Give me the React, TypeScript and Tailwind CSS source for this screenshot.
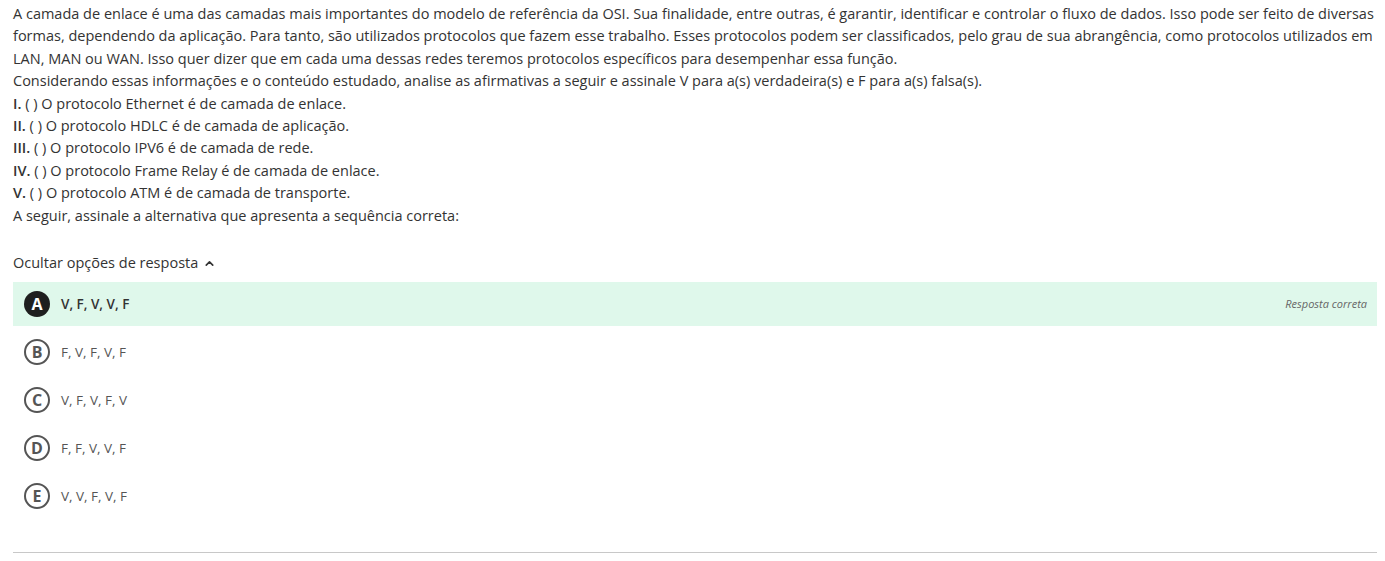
import { ChevronUp } from "lucide-react";

const options = [
  { letter: "A", text: "V, F, V, V, F", correct: true },
  { letter: "B", text: "F, V, F, V, F" },
  { letter: "C", text: "V, F, V, F, V" },
  { letter: "D", text: "F, F, V, V, F" },
  { letter: "E", text: "V, V, F, V, F" },
];

const items = [
  ["I.", "O protocolo Ethernet é de camada de enlace."],
  ["II.", "O protocolo HDLC é de camada de aplicação."],
  ["III.", "O protocolo IPV6 é de camada de rede."],
  ["IV.", "O protocolo Frame Relay é de camada de enlace."],
  ["V.", "O protocolo ATM é de camada de transporte."],
];

export default function App() {
  return (
    <div className="bg-white min-h-screen pl-[13px] pr-[8px] pt-[3px] font-['Open_Sans',sans-serif] text-[14.5px] leading-[22.4px] text-[#333]">
      <div>
        <p>
          A camada de enlace é uma das camadas mais importantes do modelo de referência da OSI. Sua finalidade, entre outras, é garantir, identificar e controlar o fluxo de dados. Isso pode ser feito de diversas formas, dependendo da aplicação. Para tanto, são utilizados protocolos que fazem esse trabalho. Esses protocolos podem ser classificados, pelo grau de sua abrangência, como protocolos utilizados em LAN, MAN ou WAN. Isso quer dizer que em cada uma dessas redes teremos protocolos específicos para desempenhar essa função.
        </p>
        <p>
          Considerando essas informações e o conteúdo estudado, analise as afirmativas a seguir e assinale V para a(s) verdadeira(s) e F para a(s) falsa(s).
        </p>
        {items.map(([n, t]) => (
          <p key={n}>
            <span className="font-semibold">{n}</span> ( ) {t}
          </p>
        ))}
        <p>A seguir, assinale a alternativa que apresenta a sequência correta:</p>
      </div>

      <button className="mt-[25px] flex items-center gap-[5px] text-[14.5px] text-[#333]">
        Ocultar opções de resposta
        <ChevronUp size={13} strokeWidth={3} />
      </button>

      <div className="mt-[8px] flex flex-col gap-[4px]">
        {options.map((o) =>
          o.correct ? (
            <div key={o.letter} className="flex h-[44px] items-center bg-[#dff8eb] pl-[11px] pr-[10px]">
              <span className="flex h-[26px] w-[26px] items-center justify-center rounded-full bg-[#1f1f1f] text-[16px] font-bold text-white">
                {o.letter}
              </span>
              <span className="ml-[11px] text-[13.5px] font-semibold text-[#333]">{o.text}</span>
              <span className="ml-auto text-[11px] italic text-[#666]">Resposta correta</span>
            </div>
          ) : (
            <div key={o.letter} className="flex h-[44px] items-center pl-[11px]">
              <span className="flex h-[26px] w-[26px] items-center justify-center rounded-full border-2 border-[#555] text-[16px] font-bold text-[#555]">
                {o.letter}
              </span>
              <span className="ml-[11px] text-[13.5px] text-[#555]">{o.text}</span>
            </div>
          )
        )}
      </div>

      <hr className="mt-[34px] border-t border-[#c8c8c8]" />
    </div>
  );
}
